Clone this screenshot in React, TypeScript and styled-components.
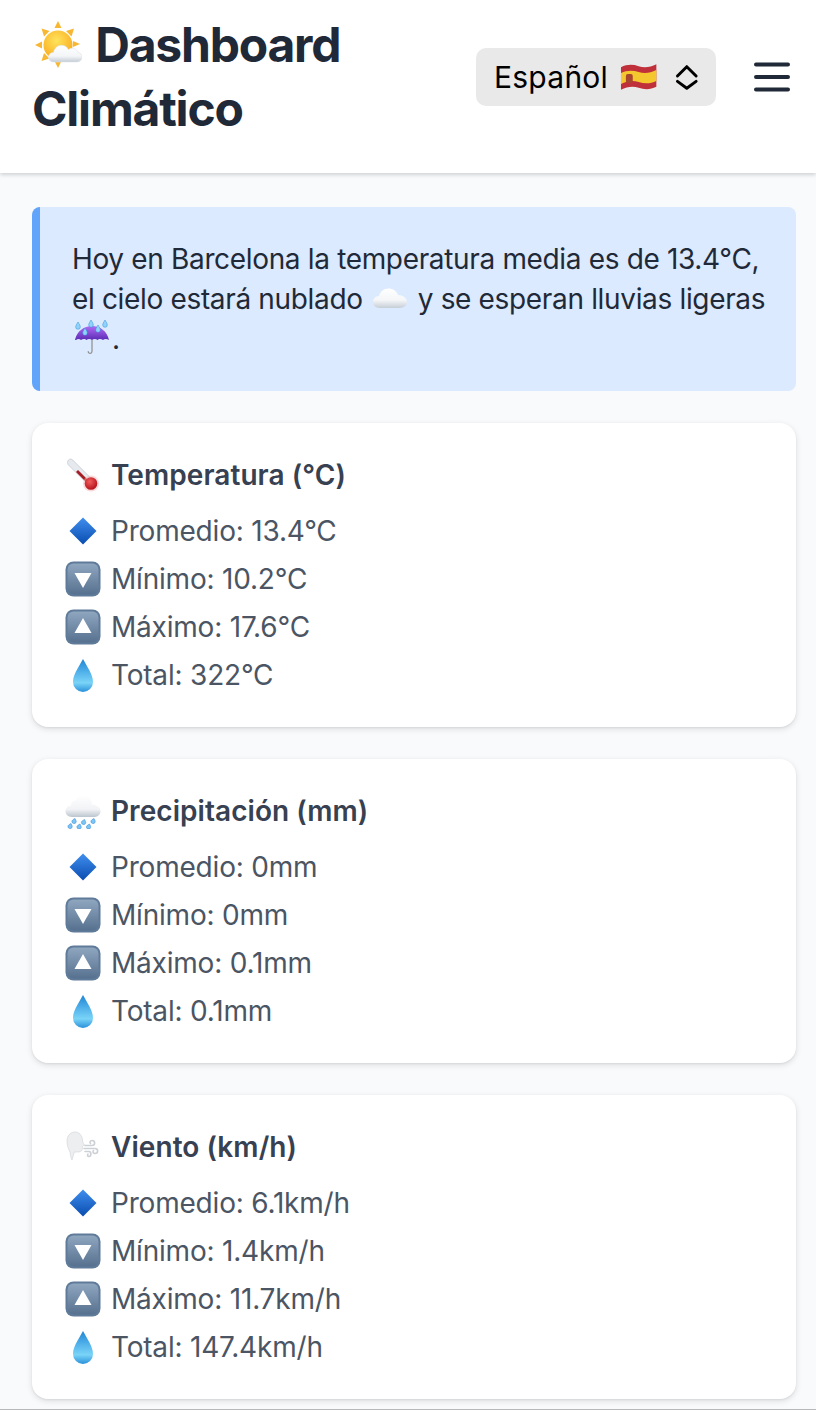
import styled, { createGlobalStyle } from "styled-components"

const Global = createGlobalStyle`
    html, body {
        margin: 0;
        padding: 0;
        background: #f9fafb;
    }
    * {
        box-sizing: border-box;
    }
`

const Page = styled.div`
    width: 816px;
    height: 1410px;
    overflow: hidden;
    background: #f9fafb;
    border-bottom: 1px solid #b8b8b8;
    font-family: Inter, "Liberation Sans", sans-serif;
`

const Header = styled.header`
    height: 173px;
    padding: 13px 26px 0 32px;
    background: #fff;
    box-shadow: 0 2px 4px rgba(0, 0, 0, 0.16);
    display: flex;
    justify-content: space-between;
    align-items: flex-start;
`

const Title = styled.h1`
    width: 340px;
    margin: 0;
    font-size: 48px;
    line-height: 64px;
    font-weight: 700;
    letter-spacing: -1.2px;
    color: #1f2937;
    svg {
        width: 48px;
        height: 48px;
        margin: 0 3px 0 2px;
        vertical-align: -7px;
    }
`

const Controls = styled.div`
    display: flex;
    align-items: center;
    gap: 38px;
    margin-top: 35px;
`

const LangSelect = styled.div`
    width: 240px;
    height: 58px;
    padding: 0 17px 0 18px;
    border-radius: 10px;
    background: #e9e9ea;
    color: #000;
    font-size: 30px;
    display: flex;
    align-items: center;
`

const LangLabel = styled.span`
    margin-right: 11px;
    letter-spacing: 0.25px;
`

const Flag = styled.svg`
    width: 40px;
    height: 30px;
    margin-right: 17px;
`

const Chevrons = styled.svg`
    width: 24px;
    height: 28px;
`

const Burger = styled.svg`
    width: 36px;
    height: 32px;
`

const Main = styled.main`
    padding: 34px 20px 0 32px;
    display: flex;
    flex-direction: column;
    gap: 32px;
`

const Alert = styled.div`
    height: 184px;
    padding: 32px 24px 0 32px;
    border-left: 8px solid #60a5fa;
    border-radius: 8px;
    background: #dbeafe;
    color: #1f2937;
    font-size: 28px;
    line-height: 40px;
    letter-spacing: -0.34px;
    svg {
        width: 36px;
        height: 36px;
        margin: 0 2px;
        vertical-align: -7px;
    }
`

const Card = styled.section`
    height: 304px;
    padding: 32px;
    border-radius: 16px;
    background: #fff;
    box-shadow: 0 2px 6px rgba(0, 0, 0, 0.12), 0 1px 2px rgba(0, 0, 0, 0.06);
`

const CardTitle = styled.h2`
    margin: 0 0 12px;
    height: 40px;
    display: flex;
    align-items: center;
    gap: 10px;
    font-size: 28px;
    font-weight: 600;
    letter-spacing: 0.06px;
    color: #374151;
    svg {
        width: 36px;
        height: 36px;
        margin-left: 1px;
    }
`

const Row = styled.div`
    height: 48px;
    display: flex;
    align-items: center;
    gap: 10px;
    font-size: 28px;
    letter-spacing: -0.2px;
    color: #4b5563;
    svg {
        width: 36px;
        height: 36px;
        margin-left: 1px;
    }
`

const SunCloud = () => (
    <svg viewBox="0 0 48 48">
        <defs>
            <radialGradient id="sunFill" cx="0.45" cy="0.35" r="0.7">
                <stop offset="0" stopColor="#ffe45c" />
                <stop offset="1" stopColor="#f9a81c" />
            </radialGradient>
            <linearGradient id="sunCloudFill" x1="0" y1="0" x2="0" y2="1">
                <stop offset="0" stopColor="#ffffff" />
                <stop offset="0.65" stopColor="#f3f5f7" />
                <stop offset="1" stopColor="#c3ccd6" />
            </linearGradient>
        </defs>
        <g fill="#f7b733">
            <path d="M24 0l3.500 7h-7z" />
            <path d="M24 47l3.500-7h-7z" />
            <path d="M1 24l7-3.500v7z" />
            <path d="M46 23l-7-3v6z" />
            <path d="M7.500 7.500l8 2.500-5.500 5.500z" />
            <path d="M40 7.500l-8 2.500 5.500 5.500z" />
            <path d="M7.500 40l8-2.500-5.500-5.500z" />
        </g>
        <circle cx="24" cy="24" r="14.500" fill="url(#sunFill)" />
        <path d="M20 41c-3.500 0-5.500-2.200-5.500-4.800 0-2.800 2.200-4.700 5-4.700.8-4 3.700-7.200 8-7.200 3.300 0 5.800 1.800 6.900 4.400 3.100-2.600 8.600-1.200 9.600 2.600 2.300.3 4 2.200 4 4.700 0 3-2.300 5-5.500 5z" fill="url(#sunCloudFill)" stroke="#dfe4ea" strokeWidth="0.6" />
    </svg>
)

const Cloud = () => (
    <svg viewBox="0 0 36 36">
        <defs>
            <linearGradient id="cloudFill" x1="0" y1="0" x2="0" y2="1">
                <stop offset="0" stopColor="#ffffff" />
                <stop offset="0.6" stopColor="#f4f6f8" />
                <stop offset="1" stopColor="#c6ced6" />
            </linearGradient>
        </defs>
        <path d="M8 28c-4.500 0-7-2.800-7-6 0-3.300 2.500-5.800 6-6 1-4 4.500-7.500 9.500-7.500 4.500 0 8 2.500 9.500 6.500 5 0 9 3 9 6.800 0 3.600-3 6.200-7.500 6.200z" fill="url(#cloudFill)" />
    </svg>
)

const Umbrella = () => (
    <svg viewBox="0 0 36 36">
        <defs>
            <linearGradient id="umbFill" x1="0" y1="0" x2="0" y2="1">
                <stop offset="0" stopColor="#b26cf5" />
                <stop offset="1" stopColor="#5b2bb5" />
            </linearGradient>
        </defs>
        <path d="M18 20v11.500c0 2.500-3.800 2.500-3.800 0" fill="none" stroke="#8d8d8d" strokeWidth="1.200" strokeLinecap="round" />
        <path d="M1 20C3 11 10 6 18 6s15 5 17 14c-2-1.500-4.500-1.500-6 0-1.500-1.500-4.500-1.500-5.500 0-1.500-1.500-4-1.500-5.500 0-1.500-1.500-4-1.500-5.500 0-1-1.500-4-1.500-5.500 0-1.500-1.500-3.500-1.500-5 0z" fill="url(#umbFill)" />
        <g fill="#8fd3fa" stroke="#2f8fd8" strokeWidth="0.5">
            <path d="M4 2c1.500 2.500 2.300 3.700 2.300 5a2.300 2.300 0 0 1-4.600 0c0-1.300.8-2.500 2.300-5z" />
            <path d="M17 0c1.500 2.500 2.300 3.700 2.300 5a2.300 2.300 0 0 1-4.600 0c0-1.300.8-2.500 2.300-5z" />
            <path d="M31 0c1.500 2.500 2.300 3.700 2.300 5a2.300 2.300 0 0 1-4.600 0c0-1.300.8-2.500 2.300-5z" />
            <path d="M11 8c1.500 2.500 2.300 3.700 2.300 5a2.300 2.300 0 0 1-4.600 0c0-1.300.8-2.500 2.300-5z" />
            <path d="M24 5c1.500 2.500 2.300 3.700 2.300 5a2.300 2.300 0 0 1-4.600 0c0-1.300.8-2.500 2.300-5z" />
        </g>
    </svg>
)

const Thermometer = () => (
    <svg viewBox="0 0 36 36">
        <defs>
            <radialGradient id="bulbFill" cx="0.4" cy="0.35" r="0.65">
                <stop offset="0" stopColor="#f25c5c" />
                <stop offset="1" stopColor="#b5121b" />
            </radialGradient>
        </defs>
        <path d="M3.500 3c1.300-1.300 3-1.200 4.300.1l19 19-4.600 4.600-19-19C2.400 6.400 2.200 4.300 3.500 3z" fill="#e6e9ed" stroke="#b9bfc6" strokeWidth="0.6" />
        <path d="M13 13l10.500 10.500-2 2L11 15z" fill="#a51d24" />
        <circle cx="26" cy="26.500" r="8" fill="#f3b3b3" opacity="0.5" />
        <circle cx="26" cy="26.500" r="6.300" fill="url(#bulbFill)" />
    </svg>
)

const RainCloud = () => (
    <svg viewBox="0 0 36 36">
        <defs>
            <linearGradient id="rainFill" x1="0" y1="0" x2="0" y2="1">
                <stop offset="0" stopColor="#ffffff" />
                <stop offset="0.65" stopColor="#f1f3f6" />
                <stop offset="1" stopColor="#bcc5ce" />
            </linearGradient>
        </defs>
        <path d="M7 24c-4 0-6.500-2.500-6.500-5.700 0-3 2.200-5.300 5.200-5.600C6 9.500 8.200 7.500 11 7c1.300-3 4-5 7.500-5 4.200 0 7.500 2.800 8 7 1 2 0 2 0 2.500 5 .2 9 2.800 9 6.700 0 3.500-3 5.800-7.500 5.800z" fill="url(#rainFill)" />
        <g fill="#7cc6f3" stroke="#2c7fd1" strokeWidth="0.5">
            <path d="M10 25.500c.8 1.600 1.400 2.500 1.200 3.500a2.200 2.200 0 0 1-4.300-.8c.2-1 1.400-1.800 3.100-2.700z" />
            <path d="M19.500 26.500c.8 1.600 1.400 2.500 1.200 3.500a2.200 2.200 0 0 1-4.300-.8c.2-1 1.400-1.800 3.100-2.700z" />
            <path d="M29 25.500c.8 1.600 1.400 2.500 1.200 3.500a2.200 2.200 0 0 1-4.300-.8c.2-1 1.400-1.800 3.100-2.700z" />
            <path d="M6 30.500c.8 1.600 1.400 2.500 1.200 3.500a2.200 2.200 0 0 1-4.300-.8c.2-1 1.400-1.800 3.100-2.700z" />
            <path d="M15 31c.8 1.600 1.400 2.500 1.200 3.500a2.200 2.200 0 0 1-4.300-.8c.2-1 1.400-1.800 3.100-2.700z" />
            <path d="M24.500 31c.8 1.600 1.400 2.500 1.200 3.500a2.200 2.200 0 0 1-4.300-.8c.2-1 1.400-1.800 3.100-2.700z" />
        </g>
    </svg>
)

const WindFace = () => (
    <svg viewBox="0 0 36 36">
        <path d="M2 12C2 6 6 3 10 3c4 0 7 3 7.500 8 .2 2 .5 3 2 5-1 .5-1.500 1-2 1.500.3 1.500-.2 3-.7 4-1.500 2-5 1.500-7.500 1.500L7 31c-2-3-1-6-2.500-9C3 19 2 16 2 12z" fill="#eceef0" stroke="#cfd3d8" strokeWidth="0.6" />
        <g fill="none" stroke="#cdd1d6" strokeWidth="1.600" strokeLinecap="round">
            <path d="M20 16.500h7c3.500 0 3.500-5 0-5-2 0-2.500 2-1.500 3" />
            <path d="M19 19.500h11c3.500 0 3.500 5 0 5-2 0-2.500-2-1.500-3" />
            <path d="M20 22.500h4c2.500 0 2.500 5 0 5-1.500 0-2-1.500-1-2.500" />
        </g>
    </svg>
)

const Diamond = () => (
    <svg viewBox="0 0 36 36">
        <defs>
            <linearGradient id="diamondFill" x1="0" y1="0" x2="0" y2="1">
                <stop offset="0" stopColor="#3f8fee" />
                <stop offset="1" stopColor="#0a4cb0" />
            </linearGradient>
        </defs>
        <path d="M18 4.500l13.500 13.500-13.500 13.500L4.500 18z" fill="url(#diamondFill)" />
    </svg>
)

const ArrowBox = ({ id, points }: { id: string; points: string }) => (
    <svg viewBox="0 0 36 36">
        <defs>
            <linearGradient id={id} x1="0" y1="0" x2="0" y2="1">
                <stop offset="0" stopColor="#8fa6bf" />
                <stop offset="1" stopColor="#56718f" />
            </linearGradient>
        </defs>
        <rect x="0.500" y="0.500" width="35" height="35" rx="8" fill="#5f7b99" />
        <rect x="2.500" y="2.500" width="31" height="31" rx="6" fill={`url(#${id})`} />
        <polygon points={points} fill="#fff" />
    </svg>
)

const Drop = () => (
    <svg viewBox="0 0 36 36">
        <defs>
            <linearGradient id="dropFill" x1="0" y1="0" x2="0" y2="1">
                <stop offset="0" stopColor="#1f86d6" />
                <stop offset="0.72" stopColor="#7ad4f8" />
                <stop offset="1" stopColor="#2a90da" />
            </linearGradient>
        </defs>
        <path d="M18 2c5 9 10 16 10 23a10 10 0 0 1-20 0c0-7 5-14 10-23z" fill="url(#dropFill)" />
    </svg>
)

const stats = [
    {
        title: "Temperatura (°C)",
        icon: <Thermometer />,
        values: ["13.4°C", "10.2°C", "17.6°C", "322°C"],
    },
    {
        title: "Precipitación (mm)",
        icon: <RainCloud />,
        values: ["0mm", "0mm", "0.1mm", "0.1mm"],
    },
    {
        title: "Viento (km/h)",
        icon: <WindFace />,
        values: ["6.1km/h", "1.4km/h", "11.7km/h", "147.4km/h"],
    },
]

const rows = [
    { label: "Promedio", icon: <Diamond /> },
    { label: "Mínimo", icon: <ArrowBox id="boxDown" points="9.500,12 26.500,12 18,27" /> },
    { label: "Máximo", icon: <ArrowBox id="boxUp" points="9.500,24 26.500,24 18,9" /> },
    { label: "Total", icon: <Drop /> },
]

export default function App() {
    return (
        <Page>
            <Global />
            <Header>
                <Title>
                    <SunCloud /> Dashboard Climático
                </Title>
                <Controls>
                    <LangSelect>
                        <LangLabel>Español</LangLabel>
                        <Flag viewBox="0 0 40 30">
                            <path d="M2 5c6-3 12-3 18-1s12 1 18-2v23c-6 3-12 3-18 1S8 25 2 28z" fill="#c0303a" />
                            <path d="M2 11c6-3 12-3 18-1s12 1 18-2v11c-6 3-12 3-18 1s-12-1-18 2z" fill="#f5c72f" />
                            <rect x="7" y="12" width="7" height="9" rx="2" fill="#a8452f" />
                        </Flag>
                        <Chevrons viewBox="0 0 24 28" fill="none" stroke="#000" strokeWidth="3" strokeLinecap="round" strokeLinejoin="round">
                            <path d="M2.500 13l9.500-9.500 9.500 9.500" />
                            <path d="M2.500 18.500l9.500 7 9.500-7" />
                        </Chevrons>
                    </LangSelect>
                    <Burger viewBox="0 0 36 32" stroke="#1f2937" strokeWidth="4" strokeLinecap="round">
                        <path d="M2 3.500h32M2 16h32M2 28.500h32" />
                    </Burger>
                </Controls>
            </Header>
            <Main>
                <Alert>
                    Hoy en Barcelona la temperatura media es de 13.4°C, el cielo estará nublado <Cloud /> y se esperan lluvias ligeras <Umbrella />.
                </Alert>
                {stats.map((stat) => (
                    <Card key={stat.title}>
                        <CardTitle>
                            {stat.icon}
                            {stat.title}
                        </CardTitle>
                        {rows.map((row, i) => (
                            <Row key={row.label}>
                                {row.icon}
                                {row.label}: {stat.values[i]}
                            </Row>
                        ))}
                    </Card>
                ))}
            </Main>
        </Page>
    )
}
